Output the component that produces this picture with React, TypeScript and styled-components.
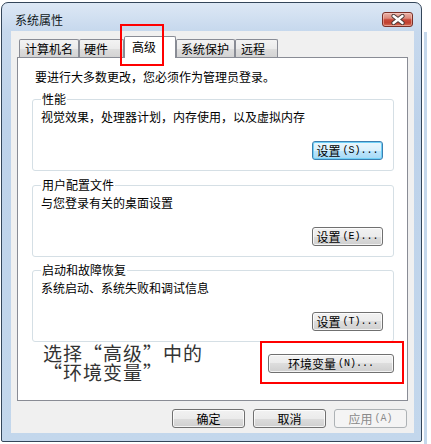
import React from "react";
import styled, { createGlobalStyle, css } from "styled-components";

const GlobalStyle = createGlobalStyle`
  html, body { margin: 0; padding: 0; background: #ffffff; }
  body {
    font-family: "Noto Sans CJK SC", "Noto Sans", sans-serif;
    font-size: 12px;
    color: #000;
  }
  * { box-sizing: border-box; }
`;

const Page = styled.div`
  display: flex;
  align-items: flex-start;
  width: 431px;
  height: 444px;
  overflow: hidden;
  padding: 2px 0 0 1px;
`;

const Window = styled.div`
  width: 421px;
  height: 440px;
  border: 1px solid #34465a;
  border-radius: 7px 7px 2px 2px;
  background: linear-gradient(180deg, #dde8f5 0px, #c6d8ed 28px, #bdd2ea 120px, #c3d7ec 100%);
  display: flex;
  flex-direction: column;
  padding: 0 7px 8px 9px;
`;

const Stripe = styled.div`
  width: 3px;
  height: 412px;
  margin: 30px 0 0 2px;
  background: #c5d8ec;
`;

const TitleBar = styled.div`
  height: 28px;
  display: flex;
  justify-content: space-between;
  align-items: flex-start;
  padding-left: 4px;
`;

const Title = styled.div`
  margin-top: 9px;
  line-height: 16px;
  font-size: 12px;
  color: #101820;
`;

const CloseButton = styled.div`
  margin-top: 9px;
  margin-right: 1px;
  width: 31px;
  height: 15px;
  border: 1px solid #7a3028;
  border-radius: 3px;
  background: linear-gradient(
    180deg,
    #eab2a8 0%,
    #dc8a7c 40%,
    #c9493a 52%,
    #c0402f 75%,
    #d6705a 100%
  );
  box-shadow: inset 0 0 0 1px rgba(255, 220, 210, 0.45);
  display: flex;
  align-items: center;
  justify-content: center;
`;

const Client = styled.div`
  height: 402px;
  background: #f0f0f0;
  display: flex;
  flex-direction: column;
  padding: 5px 6px 0;
`;

const TabStrip = styled.div`
  height: 21px;
  display: flex;
  align-items: flex-end;
  padding-left: 2px;
  position: relative;
  z-index: 1;
`;

const Tab = styled.div<{ $active?: boolean; $w: number; $pl: number }>`
  width: ${(p) => p.$w}px;
  padding-left: ${(p) => p.$pl}px;
  border: 1px solid #898c95;
  border-bottom: none;
  border-radius: 2px 2px 0 0;
  font-size: 12px;
  white-space: nowrap;
  display: flex;
  align-items: center;
  ${(p) =>
    p.$active
      ? css`
          position: relative;
          height: 22px;
          margin-bottom: -1px;
          background: #ffffff;
          padding-bottom: 2px;
        `
      : css`
          height: 18px;
          background: linear-gradient(180deg, #f3f3f3 0%, #ebebeb 50%, #dedede 50%, #d3d3d3 100%);
        `}
`;

const Highlight = styled.div<{ $l: number; $t: number; $w: number; $h: number }>`
  position: absolute;
  left: ${(p) => p.$l}px;
  top: ${(p) => p.$t}px;
  width: ${(p) => p.$w}px;
  height: ${(p) => p.$h}px;
  border: 2px solid #ff0000;
  pointer-events: none;
  z-index: 5;
`;

const Panel = styled.div`
  height: 344px;
  border: 1px solid #898c95;
  background: #ffffff;
  display: flex;
  flex-direction: column;
  padding: 11px 13px 0 14px;
`;

const Notice = styled.div`
  margin-left: 3px;
  line-height: 16px;
`;

const Group = styled.fieldset<{ $gap: number }>`
  margin: ${(p) => p.$gap}px 0 0 0;
  border: 1px solid #d5dfe5;
  border-radius: 3px;
  padding: 0 10px 10px 8px;
  min-width: 0;
  display: flex;
  flex-direction: column;
`;

const Legend = styled.legend`
  padding: 0 1px;
  line-height: 14px;
  font-size: 12px;
`;

const Desc = styled.div`
  margin-top: 3px;
  line-height: 16px;
`;

const ButtonRow = styled.div`
  margin-top: 16px;
  display: flex;
  justify-content: flex-end;
`;

const Button = styled.div<{ $w: number; $variant?: "focus" | "disabled" }>`
  width: ${(p) => p.$w}px;
  height: 19px;
  border: 1px solid #707070;
  border-radius: 3px;
  background: linear-gradient(180deg, #f2f2f2 0%, #ebebeb 50%, #dddddd 50%, #cfcfcf 100%);
  box-shadow: inset 0 0 0 1px rgba(255, 255, 255, 0.75);
  display: flex;
  align-items: center;
  justify-content: center;
  font-size: 12px;
  line-height: 17px;
  white-space: nowrap;
  color: #000;
  ${(p) =>
    p.$variant === "focus" &&
    css`
      border-color: #3c7fb1;
      background: linear-gradient(180deg, #eaf6fd 0%, #d9f0fc 50%, #bee6fd 50%, #a7d9f5 100%);
      box-shadow: inset 0 0 0 1px #6fd0f7;
    `}
  ${(p) =>
    p.$variant === "disabled" &&
    css`
      border-color: #adb2b5;
      background: #f4f4f4;
      box-shadow: none;
      color: #8a8a8a;
    `}
`;

const Mn = styled.span`
  font-family: "Liberation Mono", "DejaVu Sans Mono", monospace;
  font-size: 10px;
  margin-left: 2px;
`;

const AnnotationRow = styled.div`
  margin-top: 1px;
  display: flex;
  justify-content: space-between;
  align-items: flex-start;
`;

const Annotation = styled.div`
  margin-left: 11px;
  display: flex;
  flex-direction: column;
`;

const AnnotationLine = styled.div`
  font-size: 19px;
  letter-spacing: 1px;
  line-height: 19px;
  height: 19px;
  color: #333333;
  white-space: nowrap;
  font-feature-settings: "fwid" 1;
`;

const ButtonWrap = styled.div`
  position: relative;
  margin-top: 11px;
`;

const Footer = styled.div`
  margin-top: 8px;
  margin-right: 1px;
  display: flex;
  justify-content: flex-end;
  gap: 8px;
`;

const CloseGlyph = () => (
  <svg width="14" height="11" viewBox="0 0 14 11">
    <path d="M2.5 2 L11.5 9 M11.5 2 L2.5 9" stroke="#4a3a38" strokeWidth="4.2" strokeLinecap="round" />
    <path d="M2.5 2 L11.5 9 M11.5 2 L2.5 9" stroke="#ffffff" strokeWidth="2.4" strokeLinecap="round" />
  </svg>
);

const tabs = [
  { label: "计算机名", w: 60, pl: 5 },
  { label: "硬件", w: 45, pl: 4 },
  { label: "高级", w: 52, pl: 7, active: true },
  { label: "系统保护", w: 59, pl: 4 },
  { label: "远程", w: 43, pl: 5 },
];

const groups = [
  { title: "性能", desc: "视觉效果，处理器计划，内存使用，以及虚拟内存", key: "S", focus: true, gap: 7 },
  { title: "用户配置文件", desc: "与您登录有关的桌面设置", key: "E", gap: 7 },
  { title: "启动和故障恢复", desc: "系统启动、系统失败和调试信息", key: "T", gap: 6 },
];

export default function App() {
  return (
    <Page lang="zh-CN">
      <GlobalStyle />
      <Window>
        <TitleBar>
          <Title>系统属性</Title>
          <CloseButton>
            <CloseGlyph />
          </CloseButton>
        </TitleBar>
        <Client>
          <TabStrip>
            {tabs.map((t) => (
              <Tab key={t.label} $active={t.active} $w={t.w} $pl={t.pl}>
                {t.label}
                {t.active && <Highlight $l={-5} $t={-13} $w={44} $h={42} />}
              </Tab>
            ))}
          </TabStrip>
          <Panel>
            <Notice>要进行大多数更改，您必须作为管理员登录。</Notice>
            {groups.map((g) => (
              <Group key={g.title} $gap={g.gap}>
                <Legend>{g.title}</Legend>
                <Desc>{g.desc}</Desc>
                <ButtonRow>
                  <Button $w={71} $variant={g.focus ? "focus" : undefined}>
                    设置<Mn>({g.key})...</Mn>
                  </Button>
                </ButtonRow>
              </Group>
            ))}
            <AnnotationRow>
              <Annotation>
                <AnnotationLine>选择“高级”中的</AnnotationLine>
                <AnnotationLine>“环境变量”</AnnotationLine>
              </Annotation>
              <ButtonWrap>
                <Button $w={126}>
                  环境变量<Mn>(N)...</Mn>
                </Button>
                <Highlight $l={-8} $t={-13} $w={144} $h={43} />
              </ButtonWrap>
            </AnnotationRow>
          </Panel>
          <Footer>
            <Button $w={73}>确定</Button>
            <Button $w={73}>取消</Button>
            <Button $w={73} $variant="disabled">
              应用<Mn>(A)</Mn>
            </Button>
          </Footer>
        </Client>
      </Window>
      <Stripe />
    </Page>
  );
}
